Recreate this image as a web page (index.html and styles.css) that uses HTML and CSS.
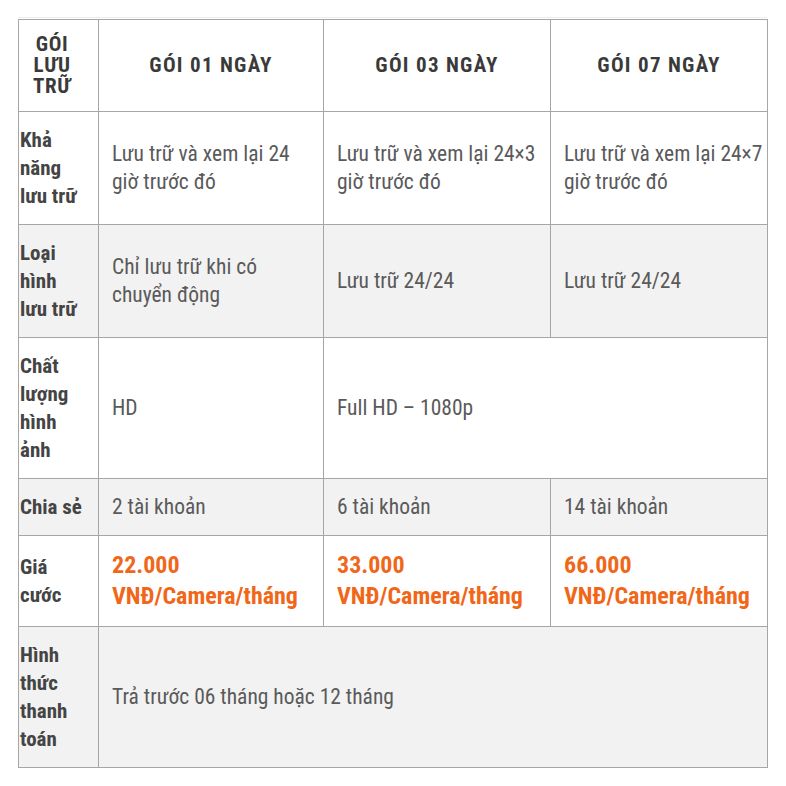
FILE: index.html
```html
<!DOCTYPE html>
<html lang="vi">
<head>
<meta charset="utf-8">
<title>Gói lưu trữ</title>
<link rel="stylesheet" href="styles.css">
</head>
<body>
<div class="wrap">
<table class="plans">
  <colgroup>
    <col class="c1"><col class="c2"><col class="c3"><col class="c4">
  </colgroup>
  <thead>
    <tr class="head">
      <th class="corner">GÓI LƯU TRỮ</th>
      <th>GÓI 01 NGÀY</th>
      <th>GÓI 03 NGÀY</th>
      <th>GÓI 07 NGÀY</th>
    </tr>
  </thead>
  <tbody>
    <tr>
      <th class="label">Khả năng lưu trữ</th>
      <td>Lưu trữ và xem lại 24 giờ trước đó</td>
      <td>Lưu trữ và xem lại 24×3 giờ trước đó</td>
      <td>Lưu trữ và xem lại 24×7 giờ trước đó</td>
    </tr>
    <tr class="alt">
      <th class="label">Loại hình lưu trữ</th>
      <td>Chỉ lưu trữ khi có chuyển động</td>
      <td>Lưu trữ 24/24</td>
      <td>Lưu trữ 24/24</td>
    </tr>
    <tr>
      <th class="label">Chất lượng hình ảnh</th>
      <td>HD</td>
      <td colspan="2">Full HD – 1080p</td>
    </tr>
    <tr class="alt">
      <th class="label">Chia sẻ</th>
      <td>2 tài khoản</td>
      <td>6 tài khoản</td>
      <td>14 tài khoản</td>
    </tr>
    <tr class="price-row">
      <th class="label">Giá cước</th>
      <td class="price">22.000 VNĐ/Camera/tháng</td>
      <td class="price">33.000 VNĐ/Camera/tháng</td>
      <td class="price">66.000 VNĐ/Camera/tháng</td>
    </tr>
    <tr class="alt">
      <th class="label">Hình thức thanh toán</th>
      <td colspan="3">Trả trước 06 tháng hoặc 12 tháng</td>
    </tr>
  </tbody>
</table>
</div>
</body>
</html>
```

FILE: styles.css
```css
html, body {
  margin: 0;
  padding: 0;
  background: #ffffff;
}

body {
  font-family: "Roboto Condensed", "Roboto", "Noto Sans", sans-serif;
  font-stretch: condensed;
}

.wrap {
  margin: 17px 0 0 18px;
  width: 749px;
  border-top: 1px solid #eeeeee;
  padding-top: 1px;
}

.plans {
  border-collapse: collapse;
  table-layout: fixed;
  width: 749px;
}

.c1 { width: 80px; }
.c2 { width: 225px; }
.c3 { width: 227px; }
.c4 { width: 217px; }

.plans th,
.plans td {
  border: 1px solid #a6a6a6;
  vertical-align: middle;
}

.head th {
  padding: 14px 6px;
  font-size: 21px;
  font-weight: 700;
  letter-spacing: 1.3px;
  color: #3a3a3a;
  text-align: center;
  line-height: 21px;
}

.head th.corner {
  padding: 14px 17px 14px 4px;
  font-size: 21px;
  letter-spacing: 0.6px;
}

.label {
  padding: 14px 13px 14px 1px;
  font-size: 21px;
  font-weight: 700;
  color: #444444;
  text-align: left;
  line-height: 28px;
}

.plans td {
  padding: 14px 4px 14px 13px;
  font-size: 21.5px;
  line-height: 28px;
  color: #5a5a5a;
}

.alt {
  background: #f2f2f2;
}

.plans td.price {
  font-size: 24px;
  font-weight: 700;
  line-height: 31px;
  color: #f0671a;
}
```
